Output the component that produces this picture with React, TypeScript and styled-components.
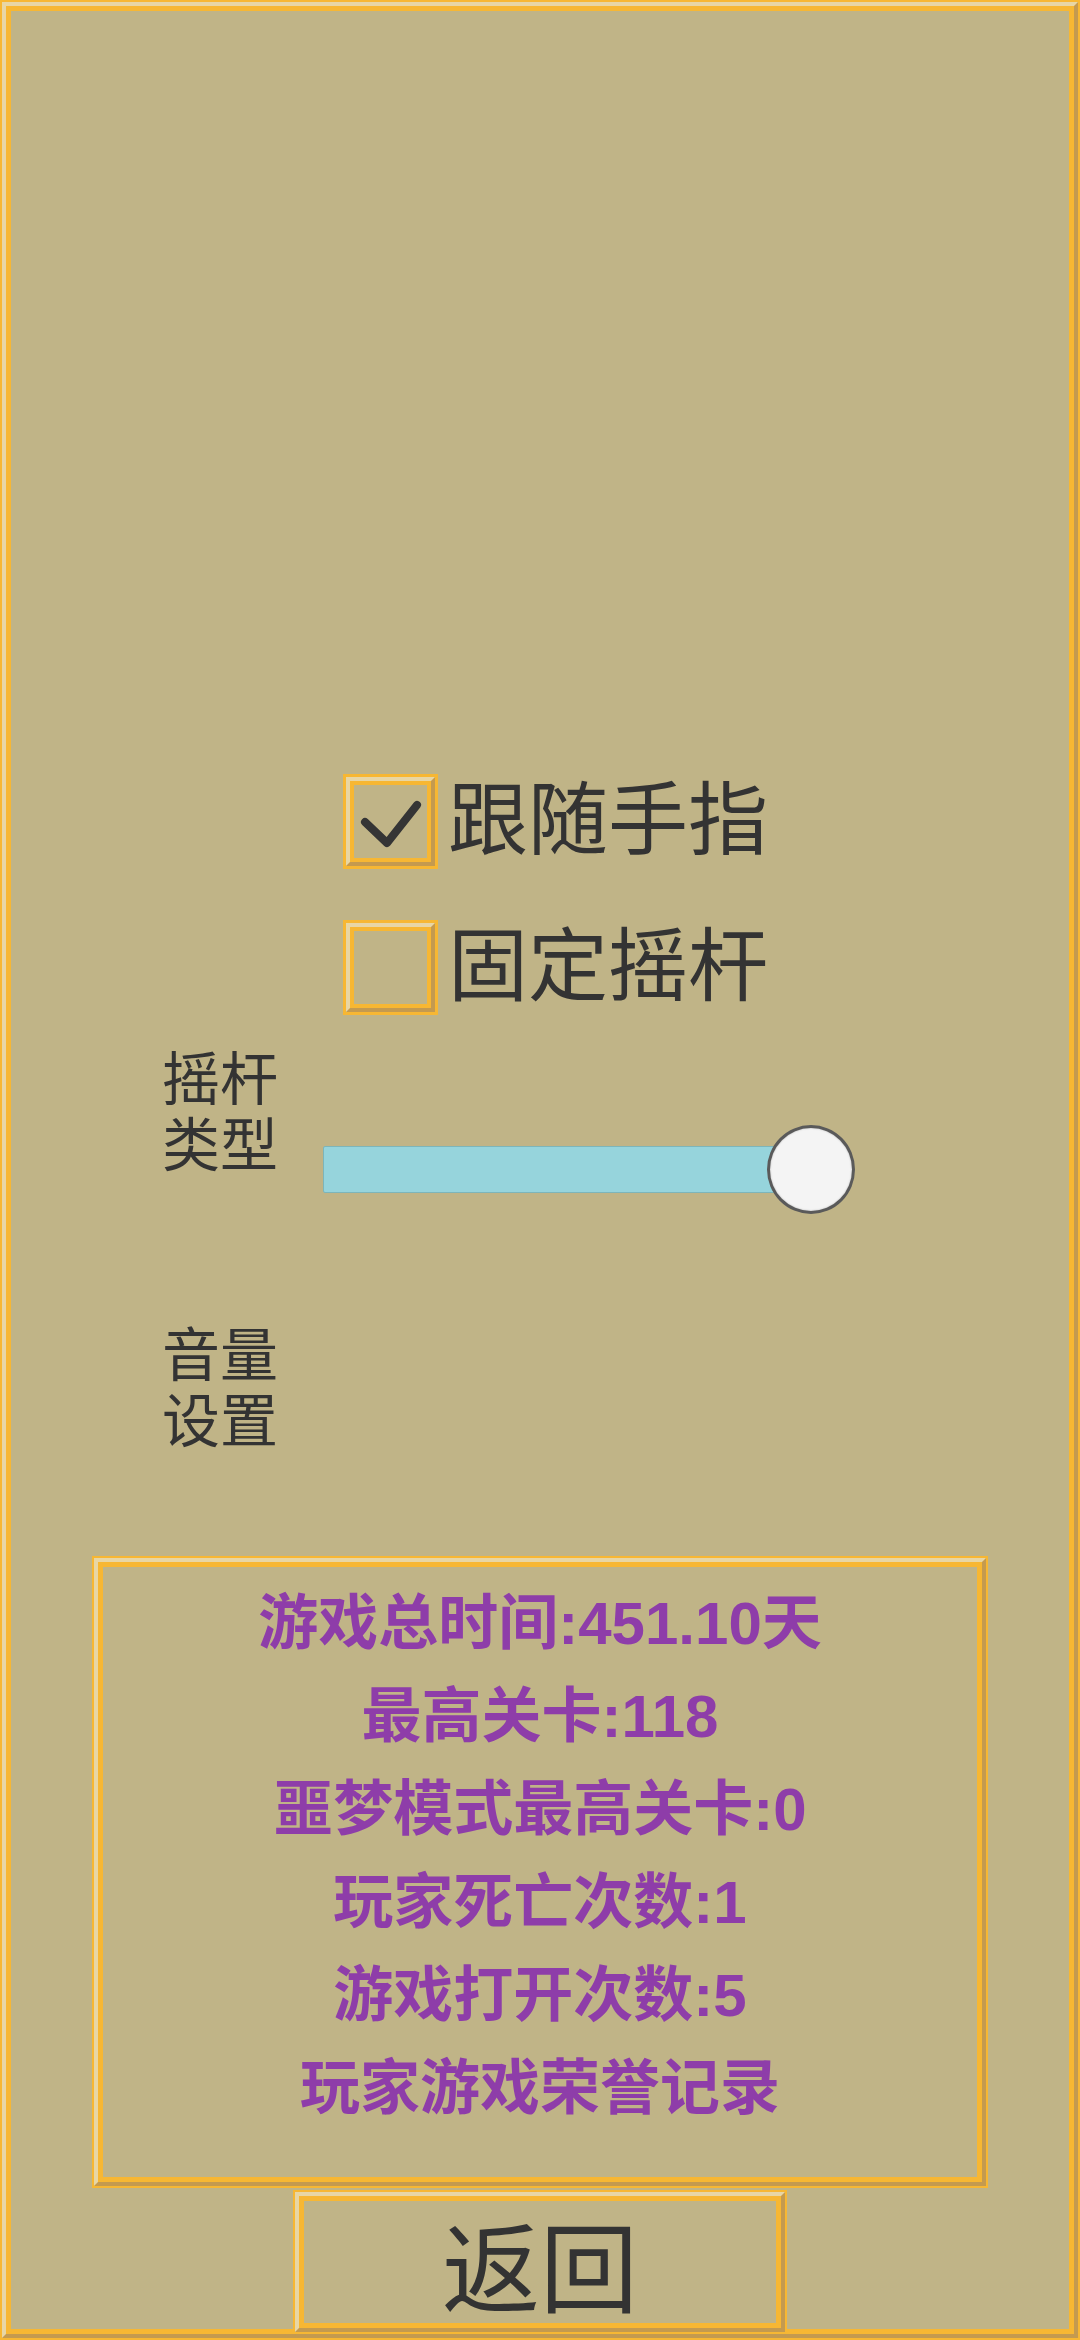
import React from 'react'
import styled, { createGlobalStyle } from 'styled-components'

const sand = '#c0b487'
const amber = '#f7b733'
const bevelLight = '#e8d6a4'
const bevelDark = '#c49a4f'
const ink = '#333333'

const GlobalStyle = createGlobalStyle`
    html, body {
        margin: 0;
        padding: 0;
        background: ${sand};
    }
    body {
        font-family: "Noto Sans CJK SC", "Noto Sans", sans-serif;
    }
`

// amber frame with a light/dark bevel, used for panels, boxes and buttons
const framed = (outer: number, bevel: number, inner: number) => `
    border: ${bevel}px solid;
    border-color: ${bevelLight} ${bevelDark} ${bevelDark} ${bevelLight};
    outline: ${outer}px solid ${amber};
    box-shadow: inset 0 0 0 ${inner}px ${amber};
    box-sizing: border-box;
`

const Page = styled.div`
    ${framed(2, 4, 5)}
    margin: 2px;
    height: calc(100vh - 4px);
    min-height: 2336px;
    display: flex;
    flex-direction: column;
    padding-top: 771px;
    overflow: hidden;
`

const CheckRow = styled.label<{ $gap: number }>`
    display: flex;
    align-items: flex-start;
    margin-left: 340px;
    margin-top: ${p => p.$gap}px;
    cursor: pointer;
`

const CheckBox = styled.span`
    ${framed(3, 4, 4)}
    width: 89px;
    height: 89px;
    display: flex;
    align-items: center;
    justify-content: center;
    flex-shrink: 0;
`

const CheckText = styled.span`
    font-size: 80px;
    line-height: 1;
    color: ${ink};
    margin-left: 13px;
    margin-top: -4px;
`

const SettingRow = styled.div<{ $gap: number }>`
    display: flex;
    align-items: flex-start;
    margin-left: 156px;
    margin-top: ${p => p.$gap}px;
`

const SettingLabel = styled.div`
    width: 120px;
    display: flex;
    flex-direction: column;
`

const LabelLine = styled.span`
    height: 66px;
    font-size: 58px;
    line-height: 66px;
    color: ${ink};
    white-space: nowrap;
`

const Slider = styled.div`
    position: relative;
    width: 532px;
    height: 89px;
    margin-top: 83px;
    margin-left: 41px;
`

const Track = styled.div`
    width: 452px;
    height: 47px;
    margin-top: 21px;
    background: #96d4dc;
    border: 1px solid #7db5ba;
    border-radius: 2px;
    box-sizing: border-box;
`

const Knob = styled.div`
    position: absolute;
    left: 444px;
    top: 0;
    width: 88px;
    height: 89px;
    border-radius: 50%;
    background: #f4f4f4;
    border: 3px solid #5a5a5a;
    box-sizing: border-box;
    box-shadow: inset 0 0 2px rgba(0, 0, 0, 0.25);
`

const StatsBox = styled.div`
    ${framed(2, 4, 5)}
    width: 892px;
    height: 628px;
    margin: 108px auto 0;
    padding-top: 15px;
    display: flex;
    flex-direction: column;
    align-items: center;
`

const StatLine = styled.div`
    font-family: "Liberation Sans", "Noto Sans CJK SC", sans-serif;
    font-weight: 700;
    font-size: 60px;
    line-height: 93px;
    color: #8e3da9;
    white-space: nowrap;
`

const BackButton = styled.button`
    ${framed(2, 4, 5)}
    width: 490px;
    height: 140px;
    margin: 6px auto 0;
    background: transparent;
    font-family: "Noto Sans CJK SC", sans-serif;
    font-size: 98px;
    line-height: 1;
    color: ${ink};
    padding: 0;
    cursor: pointer;
`

const Tick: React.FC = () => (
    <svg width="81" height="81" viewBox="0 0 81 81">
        <polyline points="15,41 37,62 67,24" fill="none" stroke="#353535" strokeWidth="8" strokeLinecap="round" strokeLinejoin="round" />
    </svg>
)

const stats = [
    '游戏总时间:451.10天',
    '最高关卡:118',
    '噩梦模式最高关卡:0',
    '玩家死亡次数:1',
    '游戏打开次数:5',
    '玩家游戏荣誉记录',
]

const App: React.FC = () => {
    const sliderValue = 1

    return (<>
        <GlobalStyle />
        <Page>
            <CheckRow $gap={0}>
                <CheckBox><Tick /></CheckBox>
                <CheckText>跟随手指</CheckText>
            </CheckRow>
            <CheckRow $gap={57}>
                <CheckBox />
                <CheckText>固定摇杆</CheckText>
            </CheckRow>

            <SettingRow $gap={30}>
                <SettingLabel>
                    <LabelLine>摇杆</LabelLine>
                    <LabelLine>类型</LabelLine>
                </SettingLabel>
                <Slider>
                    <Track />
                    <Knob style={{ left: 444 * sliderValue }} />
                </Slider>
            </SettingRow>

            <SettingRow $gap={104}>
                <SettingLabel>
                    <LabelLine>音量</LabelLine>
                    <LabelLine>设置</LabelLine>
                </SettingLabel>
            </SettingRow>

            <StatsBox>
                {stats.map(s => <StatLine key={s}>{s}</StatLine>)}
            </StatsBox>

            <BackButton>返回</BackButton>
        </Page>
    </>
    )
}

export default App
